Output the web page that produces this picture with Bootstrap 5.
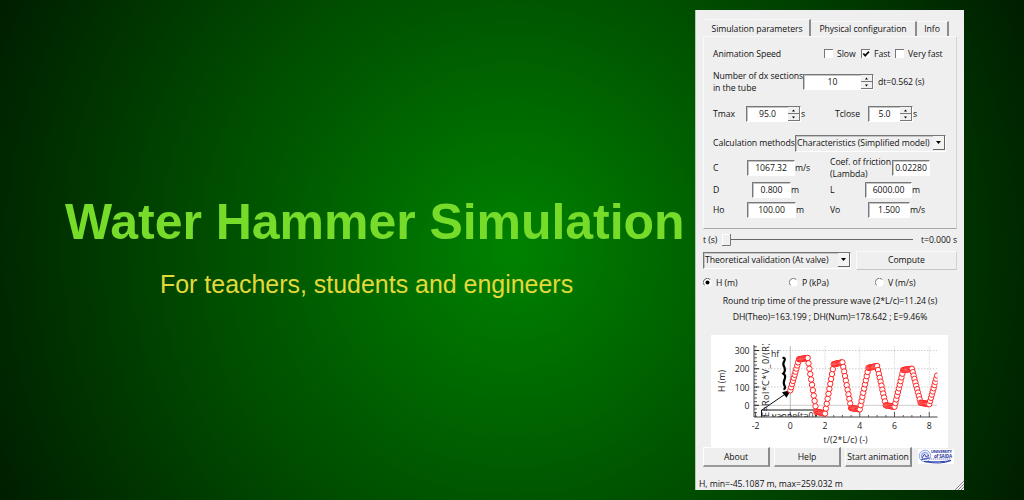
<!DOCTYPE html>
<html lang="en">
<head>
<meta charset="utf-8">
<title>Water Hammer Simulation</title>
<link href="https://cdn.jsdelivr.net/npm/bootstrap@5.3.0/dist/css/bootstrap.min.css" rel="stylesheet">
<style>
body{width:1024px;height:500px;overflow:hidden;background:radial-gradient(circle 740px at 512px 250px,#008200,#000);}
.hero{width:695px;padding:190px 0 0 65px;font-family:"Liberation Sans",sans-serif;white-space:nowrap}
.hero h1{font-weight:700;font-size:50px;line-height:65px;color:#76dc29;margin:0;letter-spacing:-.04px}
.hero p{font-size:24.95px;line-height:30px;color:#e4d93a;margin:14px 0 0 95px}
.panel{width:269px;height:480px;margin-top:10px;background:#efefef;padding:8px 7px 0 7px;font:8.7px/12px "Open Sans","Noto Sans",sans-serif;letter-spacing:-.07px;color:#111;white-space:nowrap;border-left:1px solid #b5c9b5;position:relative}
.tabs{height:18px}
.tab-a,.tab-b,.tab-c{border-right:2px solid #8c8c8c;border-top:1px solid #fafafa;line-height:15px;text-align:center}
.tab-a{width:108px;height:17px;line-height:18px;padding-left:2px}
.tab-b{width:106px;height:15px}
.tab-c{width:32px;height:15px}
.pane{height:193px;border:1px solid #fafafa;border-right:1px solid #d4d4d4;border-bottom:1px solid #a8a8a8;padding-left:9px}
.line{display:grid;align-items:center}
.r-speed{grid-template-columns:111px 37px 34px 1fr;height:16px;margin-top:9px}
.r-sect{grid-template-columns:90px 75px 1fr;height:26px;margin-top:7px}
.r-time{grid-template-columns:33px 55px 34px 33px 45px 1fr;height:18px;margin-top:10px}
.r-calc{grid-template-columns:82px 151px;height:18px;margin-top:11px}
.r-c{grid-template-columns:34px 48px 35px 62px 38px;height:24px;margin-top:4px}
.r-d{grid-template-columns:39px 39px 39px 35px 47px 1fr;height:18px;margin-top:1px}
.r-h{grid-template-columns:34px 49px 34px 38px 42px 1fr;height:18px;margin-top:2px}
.chk{width:9px;height:9px;background:#fff;border:solid;border-width:1px 0 0 1px;border-color:#777;margin:-1px 4px 0 0}
.chk svg{display:block}
.fld{height:16px;background:#fff;border:1px solid #fff;border-top-color:#777;border-left-color:#777;box-shadow:inset 1px 1px 0 #c4c4c4;text-align:center;line-height:15px}
.spin{display:flex}
.spin>span{flex:1}
.combo{background:#efefef;display:flex;justify-content:space-between;padding-left:1px;height:17px}
.combo i{width:12px;height:14px;background:#f3f3f3;border-right:1px solid #666;border-bottom:1px solid #666;display:flex;align-items:center;justify-content:center}
.r-slide{grid-template-columns:19px 192px 1fr;height:18px;margin-top:2px}
.r-comp{grid-template-columns:148px 5px 1fr;height:20px;margin-top:1px}
.btn-flat{border:1px solid #fbfbfb;border-right-color:#d2d2d2;border-bottom-color:#c6c6c6;text-align:center;height:19px;line-height:17px}
.r-radio{grid-template-columns:13px 73px 13px 73px 13px 1fr;height:16px;margin-top:5px}
.chart{display:block;margin:12px 0 0 8px;width:237px;height:113px}
.b3{width:67px;height:20px;border:1px solid #fff;border-right:2px solid #8a8a8a;border-bottom:2px solid #999;text-align:center;line-height:18px;background:#efefef}
.r-btns{grid-template-columns:67px 67px 68px 1fr;column-gap:4px;height:20px;margin-top:-1px;position:relative}
.stat{margin:11px 0 0 -4px;line-height:12px}
.grip{position:absolute;right:0;bottom:0}
</style>
</head>
<body class="d-flex">
<main class="hero flex-shrink-0">
<h1>Water Hammer Simulation</h1>
<p>For teachers, students and engineers</p>
</main>
<section class="panel flex-shrink-0">
<div class="tabs d-flex align-items-end"><div class="tab-a">Simulation parameters</div><div class="tab-b">Physical configuration</div><div class="tab-c">Info</div></div>
<div class="pane">
<div class="line r-speed"><span>Animation Speed</span>
<span class="d-flex align-items-center"><i class="chk"></i>Slow</span>
<span class="d-flex align-items-center"><i class="chk"><svg width="8" height="8"><path d="M1.3 3.5L3.2 5.6L7 1.6" fill="none" stroke="#111" stroke-width="1.8"/></svg></i>Fast</span>
<span class="d-flex align-items-center"><i class="chk"></i>Very fast</span></div>
<div class="line r-sect"><span>Number of dx sections<br>in the tube</span><div class="fld spin me-1"><span class="ps-0">10</span><svg class="arrows" width="12" height="14"></svg></div><span>dt=0.562 (s)</span></div>
<div class="line r-time"><span>Tmax</span><div class="fld spin"><span>95.0</span><svg class="arrows" width="12" height="14"></svg></div><span>s</span><span>Tclose</span><div class="fld spin"><span>5.0</span><svg class="arrows" width="12" height="14"></svg></div><span>s</span></div>
<div class="line r-calc"><span>Calculation methods</span><div class="fld combo"><span>Characteristics (Simplified model)</span><i><svg width="5" height="3"><path d="M0 0H5L2.5 3Z"/></svg></i></div></div>
<div class="line r-c"><span>C</span><div class="fld">1067.32</div><span>m/s</span><span>Coef. of friction<br>(Lambda)</span><div class="fld">0.02280</div></div>
<div class="line r-d"><span>D</span><div class="fld">0.800</div><span>m</span><span>L</span><div class="fld">6000.00</div><span>m</span></div>
<div class="line r-h"><span>Ho</span><div class="fld">100.00</div><span>m</span><span>Vo</span><div class="fld">1.500</div><span>m/s</span></div>
</div>
<div class="line r-slide"><span>t (s)</span><svg width="192" height="16"><path d="M8 7.5H191" stroke="#666"/><rect x=".5" y="2.500" width="8" height="11" fill="#f0f0f0" stroke="#fff"/><path d="M8.500 2V13.500H0" fill="none" stroke="#777"/></svg><span class="text-end">t=0.000 s</span></div>
<div class="line r-comp"><div class="fld combo"><span>Theoretical validation (At valve)</span><i><svg width="5" height="3"><path d="M0 0H5L2.5 3Z"/></svg></i></div><span></span><div class="btn-flat">Compute</div></div>
<div class="line r-radio">
<svg width="10" height="10"><circle cx="4.500" cy="4.500" r="4" fill="#fff"/><path d="M1.500 7.300A4 4 0 0 1 7.300 1.500" fill="none" stroke="#666"/><circle cx="4.500" cy="4.500" r="2" fill="#000"/></svg><span>H (m)</span>
<svg width="10" height="10"><circle cx="4.500" cy="4.500" r="4" fill="#fff"/><path d="M1.500 7.300A4 4 0 0 1 7.300 1.500" fill="none" stroke="#777"/></svg><span>P (kPa)</span>
<svg width="10" height="10"><circle cx="4.500" cy="4.500" r="4" fill="#fff"/><path d="M1.500 7.300A4 4 0 0 1 7.300 1.500" fill="none" stroke="#777"/></svg><span>V (m/s)</span></div>
<div class="text-center mt-1">Round trip time of the pressure wave (2*L/c)=11.24 (s)</div>
<div class="text-center mt-1">DH(Theo)=163.199 ; DH(Num)=178.642 ; E=9.46%</div>
<svg class="chart" viewBox="711 335 237 113" font-size="8.7" fill="#222">
<rect x="711" y="335" width="237" height="113" fill="#fff"/>
<g id="grid"></g>
<clipPath id="plot"><rect x="754" y="344" width="183.500" height="73"/></clipPath>
<g clip-path="url(#plot)">
<text transform="translate(769 417) rotate(-90)" font-size="9" textLength="74">E=Rol*C*V_0/(R)</text>
<text x="772" y="418.800" textLength="44">vanne(t=0)</text>
<path d="M761.500 417V410H816V416" fill="none" stroke="#111"/>
<path d="M762 410L786 393.500" stroke="#111"/><path d="M791 390L782 392.300L786.500 397.800Z" fill="#000"/>
<path d="M782.500 358q3.500-.5 1.800 3q-2 3 0 6q1.500 4-1 6.500q3 2 1.200 6q-1.500 4 0 6q1.500 3-1 4" fill="none" stroke="#000" stroke-width="2.200"/>
<g id="dots" fill="#fff" stroke="#f11" stroke-width=".9"></g>
</g>
<text x="771" y="357">hf</text>
<text transform="translate(725 392) rotate(-90)" textLength="22">H (m)</text>
<text x="845.500" y="443" text-anchor="middle" textLength="44">t/(2*L/c) (-)</text>
</svg>
<div class="line r-btns"><div class="b3">About</div><div class="b3">Help</div><div class="b3">Start animation</div>
<svg width="37" height="16" viewBox="0 0 37 16"><rect x="1" width="36" height="15" fill="#fff"/><circle cx="8" cy="7" r="5.800" fill="#eef2ff" stroke="#8fb0e8"/><circle cx="8" cy="7" r="3.500" fill="none" stroke="#5a70c8" stroke-width=".8"/><path d="M5 9L7.500 5L9 8L12 6M4 11Q8 9 13 9" fill="none" stroke="#3e50b0"/><text x="14" y="4" font-size="4" font-weight="700" fill="#29359b" textLength="21">UNIVERSITY</text><text x="17" y="8.500" font-size="4.500" font-weight="700" fill="#29359b" textLength="18">of SAIDA</text><path d="M14 10H34" stroke="#8791cc" stroke-dasharray="1.500 .5"/><path d="M7 12.500Q24 16 34 11.500Q24 13.500 7 12.500" stroke="#2b3faa" stroke-width="1" fill="none"/></svg></div>
<div class="stat">H, min=-45.1087 m, max=259.032 m</div>
<svg class="grip" width="10" height="10"><path d="M1 10L10 1M4 10L10 4M7 10L10 7" stroke="#888"/></svg>
</section>
<script src="https://cdn.jsdelivr.net/npm/bootstrap@5.3.0/dist/js/bootstrap.bundle.min.js"></script>
<script>
document.querySelectorAll('.arrows').forEach(s=>{s.innerHTML='<rect width="12" height="14" fill="#f1f1f1"/><path d="M0 6.500H12M0 13.500H12M11.500 0V14" stroke="#777"/><path d="M4 4.500L5.500 2.500L7 4.500ZM4 9.500L5.500 11.500L7 9.500Z" fill="#000"/>';});
const X=t=>790.3+17.37*t,Y=h=>405.3-.1827*h;
let g='';
[0,100,200,300].forEach(h=>{g+=`<path d="M756 ${Y(h)}H937" stroke="#ccc" ${h?'stroke-dasharray="1.500 1.500"':''}/><path d="M754 ${Y(h)}h5" stroke="#222"/><text x="749.500" y="${Y(h)+3.5}" text-anchor="end">${h}</text>`;});
for(let t=-2;t<=8;t+=2){g+=`<path d="M${X(t)} 346V417" stroke="${t==0?'#bbb':'#ddd'}" ${t?'stroke-dasharray="1.500 1"':''}/><text x="${X(t)}" y="429" text-anchor="middle">${t}</text>`;}
for(let t=-2;t<=8;t+=.5)g+=`<path d="M${X(t)} 417v-${t%2?2:5}" stroke="#333" stroke-width=".8"/>`;
for(let h=-60;h<=320;h+=20)g+=`<path d="M754 ${Y(h)}h3" stroke="#333" stroke-width=".8"/>`;
g+='<path d="M754 345V417H937.500" fill="none" stroke="#444"/>';
document.getElementById('grid').innerHTML=g;
// head at the valve, one knot per half round trip
const knots=[82,252,259,-35,-45,225,235,-15,-22,205,215,0,-8,193,200,14,6,180];
let d='';
for(let k=0;k<knots.length-1;k++)for(let i=0;i<10;i++)d+=`<circle cx="${X(k/2+i/20)}" cy="${Y(knots[k]+(knots[k+1]-knots[k])*i/10)}" r="2.700"/>`;
document.getElementById('dots').innerHTML=d;
</script>
</body>
</html>
